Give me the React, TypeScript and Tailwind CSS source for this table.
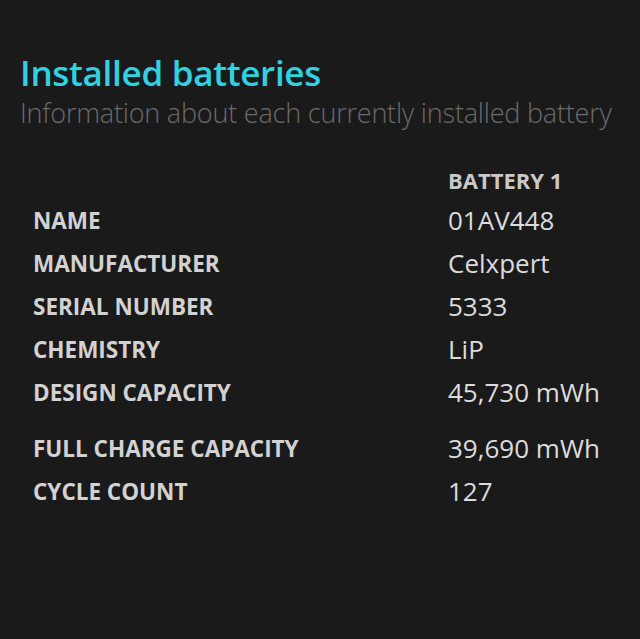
import React from 'react';

const rows: { label: string; value: string; gap?: boolean }[] = [
  { label: 'NAME', value: '01AV448' },
  { label: 'MANUFACTURER', value: 'Celxpert' },
  { label: 'SERIAL NUMBER', value: '5333' },
  { label: 'CHEMISTRY', value: 'LiP' },
  { label: 'DESIGN CAPACITY', value: '45,730 mWh' },
  { label: 'FULL CHARGE CAPACITY', value: '39,690 mWh', gap: true },
  { label: 'CYCLE COUNT', value: '127' },
];

export default function App() {
  return (
    <div className="w-[640px] h-[639px] bg-[#1a1a1a] overflow-hidden" style={{ fontFamily: '"Open Sans", "Noto Sans", sans-serif' }}>
      <div className="pt-[52px] pl-[20px]">
        <h1 className="text-[35px] leading-[42px] text-[#2bd4e2] font-semibold tracking-[-0.3px]">Installed batteries</h1>
        <p className="text-[27px] leading-[38px] text-[#6b6b6b] font-light tracking-[-0.2px] whitespace-nowrap">
          Information about each currently installed battery
        </p>
      </div>

      <div className="mt-[29px] pl-[33px]">
        <div className="flex h-[38px] items-center">
          <div className="w-[415px]" />
          <div className="text-[22px] font-bold text-[#c9c9c9]">BATTERY 1</div>
        </div>
        {rows.map((r) => (
          <div key={r.label} className={`flex h-[43px] items-center ${r.gap ? 'mt-[13px]' : ''}`}>
            <div className="w-[415px] text-[22.5px] font-bold text-[#d2d2d2]">{r.label}</div>
            <div className="text-[26px] text-[#dcdcdc]">{r.value}</div>
          </div>
        ))}
      </div>
    </div>
  );
}
